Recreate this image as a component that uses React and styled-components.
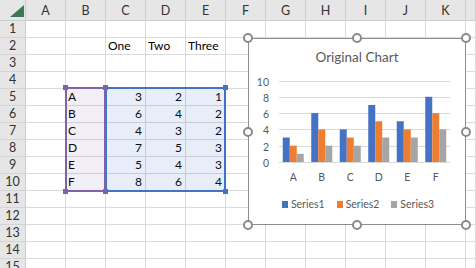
import React from 'react';
import styled, {createGlobalStyle} from "styled-components";

const GlobalStyle = createGlobalStyle`
  html, body {
    margin: 0;
    padding: 0;
    background: #ffffff;
    overflow: hidden;
  }
  body {
    font-family: Lato, "Liberation Sans", sans-serif;
  }
`

const COLS = ['A', 'B', 'C', 'D', 'E', 'F', 'G', 'H', 'I', 'J', 'K', '']
const ROW_COUNT = 15

const values = {
    C2: 'One', D2: 'Two', E2: 'Three',
}
const letters = ['A', 'B', 'C', 'D', 'E', 'F']
const series = [
    {name: 'Series1', color: '#4472c4', data: [3, 6, 4, 7, 5, 8]},
    {name: 'Series2', color: '#ed7d31', data: [2, 4, 3, 5, 4, 6]},
    {name: 'Series3', color: '#a5a5a5', data: [1, 2, 2, 3, 3, 4]},
]
letters.forEach((l, i) => {
    values['B' + (i + 5)] = l
    series.forEach((s, k) => {
        values[COLS[2 + k] + (i + 5)] = s.data[i]
    })
})

function App() {
    return (
        <>
            <GlobalStyle/>
            <Sheet>
                <Corner/>
                {COLS.map((c, i) => (
                    <ColHeader key={'h' + i} $col={i + 2}>{c}</ColHeader>
                ))}
                {Array.from({length: ROW_COUNT}, (_, r) => (
                    <React.Fragment key={r}>
                        <RowHeader $row={r + 2}>{r + 1}</RowHeader>
                        {COLS.map((c, i) => {
                            const v = values[c + (r + 1)]
                            return (
                                <Cell key={c + i} $row={r + 2} $col={i + 2}
                                      $numeric={typeof v === 'number'}>
                                    {v}
                                </Cell>
                            )
                        })}
                    </React.Fragment>
                ))}

                <Selection $area="6 / 4 / 12 / 7" $color="#4472c4" $fill="rgba(68, 114, 196, 0.12)">
                    <SelHandle $color="#4472c4" $right $top/>
                    <SelHandle $color="#4472c4" $right/>
                </Selection>
                <Selection $area="6 / 3 / 12 / 4" $color="#8062a8" $fill="rgba(128, 98, 168, 0.1)">
                    <SelHandle $color="#8062a8" $top/>
                    <SelHandle $color="#8062a8" $top $right/>
                    <SelHandle $color="#8062a8"/>
                    <SelHandle $color="#8062a8" $right/>
                </Selection>

                <Chart>
                    <ChartTitle>Original Chart</ChartTitle>
                    <BarPlot/>
                    <Legend>
                        {series.map(s => (
                            <LegendItem key={s.name}>
                                <Swatch $color={s.color}/>
                                {s.name}
                            </LegendItem>
                        ))}
                    </Legend>
                    <ChartHandle $x="left" $y="top"/>
                    <ChartHandle $x="mid" $y="top"/>
                    <ChartHandle $x="right" $y="top"/>
                    <ChartHandle $x="left" $y="mid"/>
                    <ChartHandle $x="right" $y="mid"/>
                    <ChartHandle $x="left" $y="bottom"/>
                    <ChartHandle $x="mid" $y="bottom"/>
                    <ChartHandle $x="right" $y="bottom"/>
                </Chart>
            </Sheet>
        </>
    );
}

// plot area, coordinates relative to the svg
const ZERO = 87
const UNIT = 8.15
const LEFT = 30
const BAND = 28.5
const BAR = 7

function BarPlot() {
    return (
        <PlotSvg width="216" height="112" viewBox="0 0 216 112">
            {[0, 2, 4, 6, 8, 10].map(v => {
                const y = Math.round(ZERO - v * UNIT) + 0.5
                return (
                    <g key={v}>
                        <line x1={LEFT} x2={LEFT + BAND * 6} y1={y} y2={y}
                              stroke="#d9d9d9" strokeWidth="1"/>
                        <text x="20" y={y} textAnchor="end" dominantBaseline="central">{v}</text>
                    </g>
                )
            })}
            {letters.map((l, i) => {
                const center = LEFT + BAND * i + BAND / 2
                return (
                    <g key={l}>
                        {series.map((s, k) => {
                            const h = s.data[i] * UNIT
                            return (
                                <rect key={s.name} x={center - 10.5 + k * BAR} y={ZERO - h}
                                      width={BAR} height={h} fill={s.color}/>
                            )
                        })}
                        <text x={center} y="102" textAnchor="middle" dominantBaseline="central">{l}</text>
                    </g>
                )
            })}
        </PlotSvg>
    )
}

const Sheet = styled.div`
  position: relative;
  display: grid;
  grid-template-columns: 26px repeat(11, 40px) 1fr;
  grid-template-rows: 21px repeat(15, 17px);
  width: 476px;
  height: 268px;
  overflow: hidden;
  font-size: 12px;
  color: #000;
`

const Corner = styled.div`
  grid-row: 1;
  grid-column: 1;
  position: relative;
  background: #e6e6e6;
  border-right: 1px solid #cdcdcd;
  border-bottom: 1px solid #cdcdcd;
  box-sizing: border-box;

  &::after {
    content: '';
    position: absolute;
    right: 1px;
    bottom: 3px;
    width: 0;
    height: 0;
    border-left: 14px solid transparent;
    border-bottom: 12px solid #3b7a55;
  }
`

const ColHeader = styled.div`
  grid-row: 1;
  grid-column: ${p => p.$col};
  display: flex;
  align-items: center;
  justify-content: center;
  padding-top: 1px;
  box-sizing: border-box;
  background: #e6e6e6;
  color: #333;
  font-size: 12.5px;
  border-right: 1px solid #cdcdcd;
  border-bottom: 1px solid #cdcdcd;
`

const RowHeader = styled.div`
  grid-row: ${p => p.$row};
  grid-column: 1;
  display: flex;
  align-items: flex-end;
  justify-content: center;
  padding-bottom: 1px;
  box-sizing: border-box;
  background: #e6e6e6;
  color: #333;
  font-size: 12.5px;
  line-height: 14px;
  border-right: 1px solid #cdcdcd;
  border-bottom: 1px solid #d4d4d4;
`

const Cell = styled.div`
  grid-row: ${p => p.$row};
  grid-column: ${p => p.$col};
  display: flex;
  align-items: flex-end;
  justify-content: ${p => p.$numeric ? 'flex-end' : 'flex-start'};
  padding: 0 3px 1px 2px;
  box-sizing: border-box;
  line-height: 14px;
  white-space: nowrap;
  border-right: 1px solid #dadada;
  border-bottom: 1px solid #dadada;
`

const Selection = styled.div`
  grid-area: ${p => p.$area};
  position: relative;
  margin: -2px 0 -1px -1px;
  border: 2px solid ${p => p.$color};
  background: ${p => p.$fill};
  pointer-events: none;
`

const SelHandle = styled.span`
  position: absolute;
  width: 5px;
  height: 5px;
  background: ${p => p.$color};
  ${p => p.$right ? 'right: -4px;' : 'left: -4px;'}
  ${p => p.$top ? 'top: -4px;' : 'bottom: -4px;'}
`

const Chart = styled.div`
  position: absolute;
  left: 248px;
  top: 38px;
  width: 218px;
  height: 187px;
  box-sizing: border-box;
  border: 1px solid #8e8e8e;
  background: #fff;
  display: flex;
  flex-direction: column;
  align-items: stretch;
  color: #595959;
`

const ChartTitle = styled.div`
  height: 36px;
  display: flex;
  align-items: center;
  justify-content: center;
  font-size: 13.5px;
`

const PlotSvg = styled.svg`
  display: block;
  font-family: Lato, "Liberation Sans", sans-serif;
  font-size: 10.5px;
  fill: #595959;
`

const Legend = styled.div`
  display: flex;
  justify-content: center;
  gap: 12px;
  padding-top: 10px;
  padding-left: 2px;
  font-size: 10.5px;
  line-height: 14px;
`

const LegendItem = styled.div`
  display: flex;
  align-items: center;
  gap: 3px;
`

const Swatch = styled.span`
  width: 6px;
  height: 7px;
  background: ${p => p.$color};
`

const handleX = {left: 'left: -6px;', mid: 'left: calc(50% - 5px);', right: 'right: -6px;'}
const handleY = {top: 'top: -6px;', mid: 'top: calc(50% - 5px);', bottom: 'bottom: -6px;'}

const ChartHandle = styled.span`
  position: absolute;
  width: 10px;
  height: 10px;
  box-sizing: border-box;
  border-radius: 50%;
  border: 2px solid #8a8a8a;
  background: #fff;
  ${p => handleX[p.$x]}
  ${p => handleY[p.$y]}
`

export default App;
